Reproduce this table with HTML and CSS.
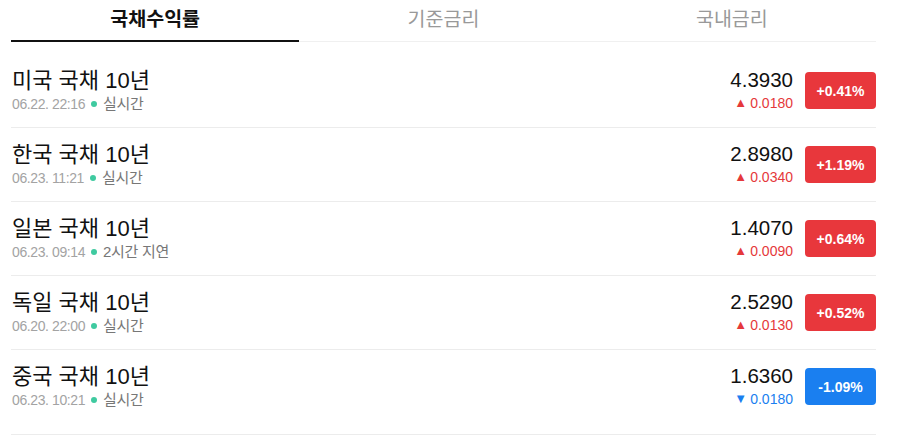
FILE: index.html
```html
<!DOCTYPE html>
<html lang="ko">
<head>
<meta charset="utf-8">
<link rel="stylesheet" href="styles.css">
</head>
<body>
<div class="wrap">
  <div class="tabs">
    <div class="tab active">국채수익률</div>
    <div class="tab">기준금리</div>
    <div class="tab">국내금리</div>
  </div>
  <ul class="list">
    <li class="row">
      <div class="info">
        <div class="name">미국 국채 10년</div>
        <div class="meta"><span class="date">06.22. 22:16</span><span class="dot"></span><span class="status">실시간</span></div>
      </div>
      <div class="vals">
        <div class="price">4.3930</div>
        <div class="chg up"><span class="arrow">▲</span>0.0180</div>
      </div>
      <div class="badge up">+0.41%</div>
    </li>
    <li class="row">
      <div class="info">
        <div class="name">한국 국채 10년</div>
        <div class="meta"><span class="date">06.23. 11:21</span><span class="dot"></span><span class="status">실시간</span></div>
      </div>
      <div class="vals">
        <div class="price">2.8980</div>
        <div class="chg up"><span class="arrow">▲</span>0.0340</div>
      </div>
      <div class="badge up">+1.19%</div>
    </li>
    <li class="row">
      <div class="info">
        <div class="name">일본 국채 10년</div>
        <div class="meta"><span class="date">06.23. 09:14</span><span class="dot"></span><span class="status">2시간 지연</span></div>
      </div>
      <div class="vals">
        <div class="price">1.4070</div>
        <div class="chg up"><span class="arrow">▲</span>0.0090</div>
      </div>
      <div class="badge up">+0.64%</div>
    </li>
    <li class="row">
      <div class="info">
        <div class="name">독일 국채 10년</div>
        <div class="meta"><span class="date">06.20. 22:00</span><span class="dot"></span><span class="status">실시간</span></div>
      </div>
      <div class="vals">
        <div class="price">2.5290</div>
        <div class="chg up"><span class="arrow">▲</span>0.0130</div>
      </div>
      <div class="badge up">+0.52%</div>
    </li>
    <li class="row last">
      <div class="info">
        <div class="name">중국 국채 10년</div>
        <div class="meta"><span class="date">06.23. 10:21</span><span class="dot"></span><span class="status">실시간</span></div>
      </div>
      <div class="vals">
        <div class="price">1.6360</div>
        <div class="chg down"><span class="arrow">▼</span>0.0180</div>
      </div>
      <div class="badge down">-1.09%</div>
    </li>
  </ul>
</div>
</body>
</html>
```

FILE: styles.css
```css
* { box-sizing: border-box; }
html, body { margin: 0; padding: 0; background: #fff; }
body {
  font-family: "Liberation Sans", "Noto Sans CJK KR", Arial, sans-serif;
  color: #111;
}
.wrap {
  width: 865px;
  margin-left: 11px;
}
.tabs {
  display: flex;
}
.tab {
  flex: 1 1 0;
  height: 42px;
  line-height: 38px;
  text-align: center;
  font-size: 19.5px;
  color: #999;
  border-bottom: 1px solid #f0f0f0;
}
.tab.active {
  color: #111;
  font-weight: bold;
  border-bottom: 2px solid #111;
}
.list {
  list-style: none;
  margin: 12px 0 0;
  padding: 0;
}
.row {
  display: flex;
  align-items: center;
  height: 74px;
  border-bottom: 1px solid #ececec;
}
.row.last {
  height: 85px;
  padding-bottom: 11px;
}
.info {
  flex: 1;
  padding-left: 1px;
}
.name {
  font-size: 22px;
  line-height: 27px;
  color: #111;
}
.meta {
  display: flex;
  align-items: center;
  font-size: 14px;
  line-height: 20px;
}
.date { color: #a3a3a3; letter-spacing: -0.4px; }
.dot {
  width: 6px;
  height: 6px;
  border-radius: 50%;
  background: #3fcaa0;
  margin: 0 6px 0 6px;
}
.status {
  color: #777;
  font-size: 15px;
  letter-spacing: -0.3px;
}
.vals {
  text-align: right;
  margin-right: 12px;
}
.price {
  font-size: 20.5px;
  line-height: 26px;
  color: #111;
}
.chg {
  font-size: 14px;
  line-height: 20px;
}
.chg .arrow { font-size: 13px; margin-right: 3px; position: relative; top: -1px; }
.chg.up { color: #e5383b; }
.chg.down { color: #1a7ff0; }
.badge {
  width: 71px;
  height: 37px;
  border-radius: 4px;
  color: #fff;
  font-size: 14px;
  font-weight: bold;
  display: flex;
  align-items: center;
  justify-content: center;
}
.badge.up { background: #e8373c; }
.badge.down { background: #1a7ff0; }
```
